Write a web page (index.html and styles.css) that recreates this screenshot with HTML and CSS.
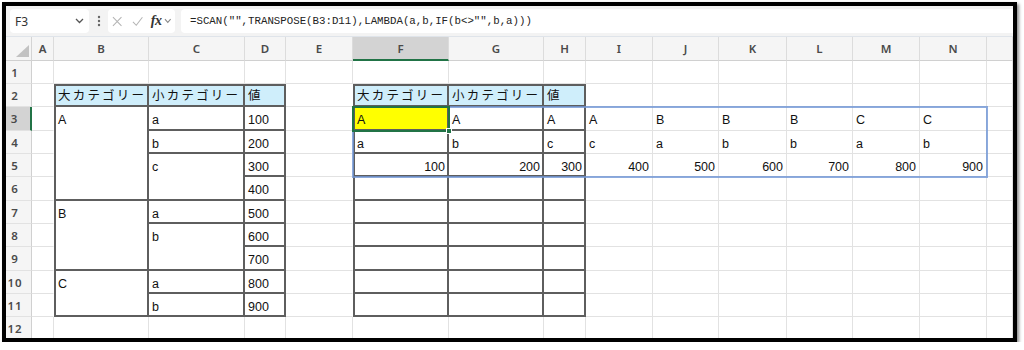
FILE: index.html
```html
<!DOCTYPE html>
<html lang="ja">
<head>
<meta charset="utf-8">
<title>SCAN</title>
<link rel="stylesheet" href="styles.css">
</head>
<body>
<div class="frame">
  <div class="fbar">
    <div class="namebox"><span>F3</span><svg width="9" height="6" viewBox="0 0 9 6"><polyline points="1,1 4.5,4.5 8,1" fill="none" stroke="#555" stroke-width="1.3"/></svg></div>
    <div class="dots"><svg width="4" height="12" viewBox="0 0 4 12"><circle cx="2" cy="2" r="1.2" fill="#666"/><circle cx="2" cy="6" r="1.2" fill="#666"/><circle cx="2" cy="10" r="1.2" fill="#666"/></svg></div>
    <div class="fxbox">
      <svg class="ic" width="11" height="11" viewBox="0 0 11 11"><path d="M1 1 L10 10 M10 1 L1 10" stroke="#b4b4b4" stroke-width="1.1" fill="none"/></svg>
      <svg class="ic" width="12" height="11" viewBox="0 0 12 11"><polyline points="1,6 4.5,9.5 11,1" stroke="#b4b4b4" stroke-width="1.1" fill="none"/></svg>
      <i class="fx">fx</i>
      <svg class="ic" width="8" height="6" viewBox="0 0 8 6"><polyline points="1,1 4,4.5 7,1" fill="none" stroke="#888" stroke-width="1.1"/></svg>
    </div>
    <div class="formula">=SCAN("",TRANSPOSE(B3:D11),LAMBDA(a,b,IF(b&lt;&gt;"",b,a)))</div>
  </div>
  <div class="sheet">
    <div class="corner"><svg width="25" height="23" viewBox="0 0 25 23"><polygon points="23,8 23,20 10,20" fill="#c2c2c2"/></svg></div>
    <div class="ch">A</div><div class="ch">B</div><div class="ch">C</div><div class="ch">D</div><div class="ch">E</div><div class="ch sel">F</div><div class="ch">G</div><div class="ch">H</div><div class="ch">I</div><div class="ch">J</div><div class="ch">K</div><div class="ch">L</div><div class="ch">M</div><div class="ch">N</div><div class="ch"></div>

    <div class="rh">1</div>
    <div class="c"></div><div class="c"></div><div class="c"></div><div class="c"></div><div class="c"></div><div class="c"></div><div class="c"></div><div class="c"></div><div class="c"></div><div class="c"></div><div class="c"></div><div class="c"></div><div class="c"></div><div class="c"></div><div class="c"></div>

    <div class="rh">2</div>
    <div class="c nr"></div>
    <div class="c t tl tt hd"><span class="jp">大カテゴリー</span></div>
    <div class="c t tt hd"><span class="jp">小カテゴリー</span></div>
    <div class="c t tt hd"><span class="jp">値</span></div>
    <div class="c nr"></div>
    <div class="c t tl tt hd"><span class="jp">大カテゴリー</span></div>
    <div class="c t tt hd"><span class="jp">小カテゴリー</span></div>
    <div class="c t tt hd"><span class="jp">値</span></div>
    <div class="c"></div><div class="c"></div><div class="c"></div><div class="c"></div><div class="c"></div><div class="c"></div><div class="c"></div>

    <div class="rh sel">3</div>
    <div class="c nr"></div>
    <div class="c t tl r4">A</div>
    <div class="c t">a</div>
    <div class="c t">100</div>
    <div class="c nr"></div>
    <div class="c t tl yl">A</div>
    <div class="c t">A</div>
    <div class="c t">A</div>
    <div class="c">A</div><div class="c">B</div><div class="c">B</div><div class="c">B</div><div class="c">C</div><div class="c">C</div><div class="c"></div>

    <div class="rh">4</div>
    <div class="c nr"></div>
    <div class="c t">b</div>
    <div class="c t">200</div>
    <div class="c nr"></div>
    <div class="c t tl">a</div>
    <div class="c t">b</div>
    <div class="c t">c</div>
    <div class="c">c</div><div class="c">a</div><div class="c">b</div><div class="c">b</div><div class="c">a</div><div class="c">b</div><div class="c"></div>

    <div class="rh">5</div>
    <div class="c nr"></div>
    <div class="c t r2">c</div>
    <div class="c t">300</div>
    <div class="c nr"></div>
    <div class="c t tl num">100</div>
    <div class="c t num">200</div>
    <div class="c t num">300</div>
    <div class="c num">400</div><div class="c num">500</div><div class="c num">600</div><div class="c num">700</div><div class="c num">800</div><div class="c num">900</div><div class="c"></div>

    <div class="rh">6</div>
    <div class="c nr"></div>
    <div class="c t">400</div>
    <div class="c nr"></div>
    <div class="c t tl"></div><div class="c t"></div><div class="c t"></div>
    <div class="c"></div><div class="c"></div><div class="c"></div><div class="c"></div><div class="c"></div><div class="c"></div><div class="c"></div>

    <div class="rh">7</div>
    <div class="c nr"></div>
    <div class="c t tl r3">B</div>
    <div class="c t">a</div>
    <div class="c t">500</div>
    <div class="c nr"></div>
    <div class="c t tl"></div><div class="c t"></div><div class="c t"></div>
    <div class="c"></div><div class="c"></div><div class="c"></div><div class="c"></div><div class="c"></div><div class="c"></div><div class="c"></div>

    <div class="rh">8</div>
    <div class="c nr"></div>
    <div class="c t r2">b</div>
    <div class="c t">600</div>
    <div class="c nr"></div>
    <div class="c t tl"></div><div class="c t"></div><div class="c t"></div>
    <div class="c"></div><div class="c"></div><div class="c"></div><div class="c"></div><div class="c"></div><div class="c"></div><div class="c"></div>

    <div class="rh">9</div>
    <div class="c nr"></div>
    <div class="c t">700</div>
    <div class="c nr"></div>
    <div class="c t tl"></div><div class="c t"></div><div class="c t"></div>
    <div class="c"></div><div class="c"></div><div class="c"></div><div class="c"></div><div class="c"></div><div class="c"></div><div class="c"></div>

    <div class="rh">10</div>
    <div class="c nr"></div>
    <div class="c t tl r2">C</div>
    <div class="c t">a</div>
    <div class="c t">800</div>
    <div class="c nr"></div>
    <div class="c t tl"></div><div class="c t"></div><div class="c t"></div>
    <div class="c"></div><div class="c"></div><div class="c"></div><div class="c"></div><div class="c"></div><div class="c"></div><div class="c"></div>

    <div class="rh">11</div>
    <div class="c nr"></div>
    <div class="c t">b</div>
    <div class="c t">900</div>
    <div class="c nr"></div>
    <div class="c t tl"></div><div class="c t"></div><div class="c t"></div>
    <div class="c"></div><div class="c"></div><div class="c"></div><div class="c"></div><div class="c"></div><div class="c"></div><div class="c"></div>

    <div class="rh">12</div>
    <div class="c"></div><div class="c"></div><div class="c"></div><div class="c"></div><div class="c"></div><div class="c"></div><div class="c"></div><div class="c"></div><div class="c"></div><div class="c"></div><div class="c"></div><div class="c"></div><div class="c"></div><div class="c"></div><div class="c"></div>

    <div class="spill"></div>
    <div class="selbox"><span class="handle"></span></div>
  </div>
</div>
</body>
</html>
```
FILE: styles.css
```css
* { box-sizing: border-box; }
html, body { margin: 0; padding: 0; background: #fff; }
body { font-family: "Liberation Sans", Arial, sans-serif; }

.frame {
  margin: 2px 0 0 2px;
  width: 1015px;
  height: 340px;
  border: 4px solid #000;
  box-shadow: 2px 2px 3px rgba(0,0,0,.45);
  overflow: hidden;
  background: #fff;
  display: flex;
  flex-direction: column;
}

/* formula bar */
.fbar {
  height: 31px;
  flex: none;
  background: #f3f3f3;
  border-bottom: 1px solid #dfe4ea;
  display: flex;
  align-items: flex-start;
  padding: 3px 0 0 4px;
}
.namebox {
  width: 79px;
  height: 24px;
  background: #fff;
  border-radius: 4px;
  display: flex;
  align-items: center;
  justify-content: space-between;
  padding: 0 5px 0 5px;
  font-family: "Noto Sans", sans-serif;
  font-size: 12px;
  color: #333;
}
.dots {
  width: 19px;
  height: 24px;
  display: flex;
  align-items: center;
  justify-content: center;
}
.fxbox {
  width: 67px;
  height: 24px;
  background: #fff;
  border-radius: 4px;
  display: flex;
  align-items: center;
  gap: 0;
  padding: 0 3px 0 4px;
}
.fxbox .ic:nth-child(1) { margin-right: 10px; }
.fxbox .ic:nth-child(2) { margin-right: 7px; }
.fx {
  font-family: "Liberation Serif", serif;
  font-weight: bold;
  font-size: 14px;
  color: #333;
  margin-right: 3px;
  letter-spacing: -0.5px;
}
.formula {
  flex: 1;
  margin-left: 6px;
  height: 24px;
  background: #fff;
  border-radius: 4px 0 0 4px;
  padding-left: 9px;
  font-family: "Liberation Mono", monospace;
  font-size: 10.75px;
  line-height: 24px;
  color: #222;
  white-space: nowrap;
}

/* sheet grid */
.sheet {
  position: relative;
  display: grid;
  grid-template-columns: 26px 22px 95px 96px 41px 67px 96px 95px 42px 67px 66px 68px 66px 67px 67px 1fr;
  grid-template-rows: 24px 23px 23px 24px 23px 23px 24px 23px 23px 24px 23px 23px 23px;
}
.corner {
  background: #f5f5f5;
  border-right: 1px solid #d4d4d4;
  border-bottom: 1px solid #d0d0d0;
}
.corner svg { display: block; }
.ch {
  background: #f5f5f5;
  border-right: 1px solid #dcdcdc;
  border-bottom: 1px solid #d0d0d0;
  text-align: center;
  font-family: "Noto Sans", sans-serif;
  font-weight: 600;
  font-size: 11.5px;
  line-height: 23px;
  color: #4a4a4a;
}
.ch.sel {
  background: #d3d3d3;
  border-bottom: 2px solid #217346;
}
.rh {
  background: #f5f5f5;
  border-right: 1px solid #d0d0d0;
  border-bottom: 1px solid #e2e2e2;
  text-align: center;
  padding: 1px 7px 0 0;
  font-family: "Noto Sans", sans-serif;
  font-weight: 600;
  font-size: 11.5px;
  letter-spacing: 1px;
  line-height: 21px;
  color: #4a4a4a;
}
.rh.sel {
  background: #d3d3d3;
  border-right: 2px solid #217346;
}

.c {
  border-right: 1px solid #e2e2e2;
  border-bottom: 1px solid #e2e2e2;
  font-size: 12.5px;
  line-height: 20px;
  padding: 3px 3px 0;
  white-space: nowrap;
  overflow: hidden;
  color: #111;
}
.c.nr { border-right-color: transparent; }
.c.t {
  border-right: 2px solid #5e5e5e;
  border-bottom: 2px solid #5e5e5e;
}
.c.tl { border-left: 2px solid #5e5e5e; padding-left: 2px; }
.c.tt { border-top: 2px solid #5e5e5e; }
.c.hd { background: #cfeefb; padding-top: 0; }
.c.yl { background: #ffff00; }
.c.num { text-align: right; }
.c.t.num { padding-right: 2px; }
.r2 { grid-row: span 2; }
.r3 { grid-row: span 3; }
.r4 { grid-row: span 4; }

.jp {
  font-family: "Noto Sans CJK JP", sans-serif;
  font-size: 12.5px;
  letter-spacing: 2.2px;
  line-height: 16px;
  color: #111;
}

/* overlays */
.spill {
  position: absolute;
  grid-area: 4 / 7 / 7 / 16;
  top: -1px; left: -1px; right: -1px; bottom: -1px;
  border: 2px solid rgba(112, 150, 214, .8);
  pointer-events: none;
}
.selbox {
  position: absolute;
  grid-area: 4 / 7 / 5 / 8;
  top: -1px; left: -1px; right: -1px; bottom: -1px;
  border: 2px solid #217346;
  pointer-events: none;
}
.handle {
  position: absolute;
  right: -4px;
  bottom: -4px;
  width: 6px;
  height: 6px;
  background: #217346;
  border: 1px solid #fff;
}
```
